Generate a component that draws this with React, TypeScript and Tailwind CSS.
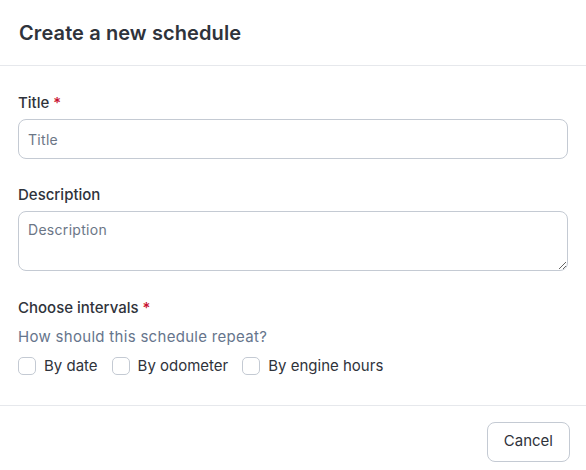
export default function App() {
  return (
    <div className="h-[470px] w-[586px] bg-white text-[#2f333b] font-['Inter',sans-serif]">
      <div className="flex h-[66px] items-center border-b border-[#e6e8ec] px-[19px]">
        <h2 className="text-[20px] font-semibold tracking-[0.1px] text-[#2f333b]">Create a new schedule</h2>
      </div>

      <div className="px-[18px] pt-[27px]">
        <label className="mb-[6px] block text-[15px] font-medium leading-[20px]">
          Title <span className="text-[#c8102e]">*</span>
        </label>
        <input
          placeholder="Title"
          className="block h-[40px] w-full rounded-[8px] border border-[#c4cad3] px-[9px] text-[14px] tracking-[0.3px] text-[#2f333b] placeholder:text-[#6b7686] outline-none"
        />

        <label className="mb-[6px] mt-[26px] block text-[15px] font-medium leading-[20px]">Description</label>
        <textarea
          placeholder="Description"
          className="block h-[60px] w-full rounded-[8px] border border-[#c4cad3] px-[9px] py-[8px] text-[14px] leading-[20px] tracking-[0.3px] text-[#2f333b] placeholder:text-[#6b7686] outline-none"
        />

        <label className="mt-[27px] block text-[15px] font-medium leading-[20px]">
          Choose intervals <span className="text-[#c8102e]">*</span>
        </label>
        <p className="mt-[9px] text-[15px] leading-[20px] tracking-[0.3px] text-[#66758c]">How should this schedule repeat?</p>
        <div className="mt-[8px] flex items-center gap-[14px] text-[15px]">
          {['By date', 'By odometer', 'By engine hours'].map(l => (
            <label key={l} className="flex items-center gap-[8px]">
              <span className="h-[18px] w-[18px] rounded-[5px] border border-[#c4cad3] bg-white" />
              {l}
            </label>
          ))}
        </div>
      </div>

      <div className="mt-[27px] flex justify-end border-t border-[#e6e8ec] px-[16px] pt-[16px]">
        <button className="h-[40px] rounded-[8px] border border-[#c4cad3] px-[16px] text-[15px] text-[#2f333b]">
          Cancel
        </button>
      </div>
    </div>
  )
}
